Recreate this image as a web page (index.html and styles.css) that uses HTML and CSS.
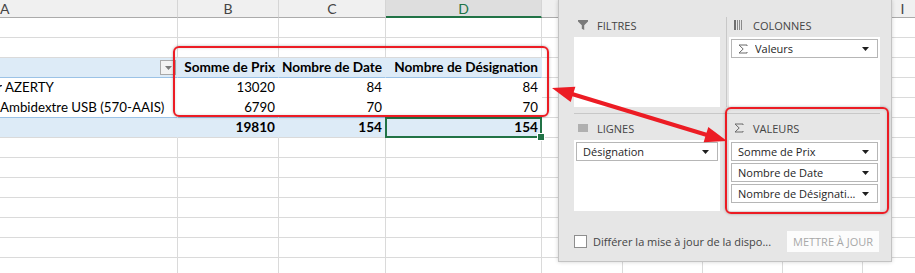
FILE: index.html
```html
<!DOCTYPE html>
<html lang="fr">
<head>
<meta charset="utf-8">
<title>Tableau croisé dynamique</title>
<link rel="stylesheet" href="styles.css">
</head>
<body>
<div class="sheet">
  <div class="row hdr">
    <div class="c ca h hA">A</div>
    <div class="c cb h">B</div>
    <div class="c cc h">C</div>
    <div class="c cd h sel">D</div>
    <div class="c ce h">E</div>
    <div class="c cf h">F</div>
    <div class="c cg h">G</div>
    <div class="c ch h">H</div>
    <div class="c ci h">I</div>
  </div>
  <div class="row">
    <div class="c ca"></div><div class="c cb"></div><div class="c cc"></div><div class="c cd"></div><div class="c ce"></div><div class="c cf"></div><div class="c cg"></div><div class="c ch"></div><div class="c ci"></div>
  </div>
  <div class="row">
    <div class="c ca"></div><div class="c cb"></div><div class="c cc"></div><div class="c cd"></div><div class="c ce"></div><div class="c cf"></div><div class="c cg"></div><div class="c ch"></div><div class="c ci"></div>
  </div>
  <div class="row">
    <div class="c ca ph phA"><span class="fbtn"><svg width="7" height="4" viewBox="0 0 7 4"><path d="M0 0H7L3.5 4Z" fill="#7b7b7b"/></svg></span></div>
    <div class="c cb ph">Somme de Prix</div>
    <div class="c cc ph">Nombre de Date</div>
    <div class="c cd ph">Nombre de Désignation</div>
    <div class="c ce"></div><div class="c cf"></div><div class="c cg"></div><div class="c ch"></div><div class="c ci"></div>
  </div>
  <div class="row">
    <div class="c ca pd lab"><span class="cut">Clavier</span> AZERTY</div>
    <div class="c cb pd">13020</div>
    <div class="c cc pd">84</div>
    <div class="c cd pd">84</div>
    <div class="c ce"></div><div class="c cf"></div><div class="c cg"></div><div class="c ch"></div><div class="c ci"></div>
  </div>
  <div class="row">
    <div class="c ca pd lab last">Ambidextre USB (570-AAIS)</div>
    <div class="c cb pd last">6790</div>
    <div class="c cc pd last">70</div>
    <div class="c cd pd last">70</div>
    <div class="c ce"></div><div class="c cf"></div><div class="c cg"></div><div class="c ch"></div><div class="c ci"></div>
  </div>
  <div class="row">
    <div class="c ca pt"></div>
    <div class="c cb pt">19810</div>
    <div class="c cc pt">154</div>
    <div class="c cd pt active">154</div>
    <div class="c ce"></div><div class="c cf"></div><div class="c cg"></div><div class="c ch"></div><div class="c ci"></div>
  </div>
  <div class="row"><div class="c ca"></div><div class="c cb"></div><div class="c cc"></div><div class="c cd"></div><div class="c ce"></div><div class="c cf"></div><div class="c cg"></div><div class="c ch"></div><div class="c ci"></div></div>
  <div class="row"><div class="c ca"></div><div class="c cb"></div><div class="c cc"></div><div class="c cd"></div><div class="c ce"></div><div class="c cf"></div><div class="c cg"></div><div class="c ch"></div><div class="c ci"></div></div>
  <div class="row"><div class="c ca"></div><div class="c cb"></div><div class="c cc"></div><div class="c cd"></div><div class="c ce"></div><div class="c cf"></div><div class="c cg"></div><div class="c ch"></div><div class="c ci"></div></div>
  <div class="row"><div class="c ca"></div><div class="c cb"></div><div class="c cc"></div><div class="c cd"></div><div class="c ce"></div><div class="c cf"></div><div class="c cg"></div><div class="c ch"></div><div class="c ci"></div></div>
  <div class="row"><div class="c ca"></div><div class="c cb"></div><div class="c cc"></div><div class="c cd"></div><div class="c ce"></div><div class="c cf"></div><div class="c cg"></div><div class="c ch"></div><div class="c ci"></div></div>
  <div class="row"><div class="c ca"></div><div class="c cb"></div><div class="c cc"></div><div class="c cd"></div><div class="c ce"></div><div class="c cf"></div><div class="c cg"></div><div class="c ch"></div><div class="c ci"></div></div>
  <div class="row"><div class="c ca"></div><div class="c cb"></div><div class="c cc"></div><div class="c cd"></div><div class="c ce"></div><div class="c cf"></div><div class="c cg"></div><div class="c ch"></div><div class="c ci"></div></div>
</div>

<div class="pane">
  <div class="areas">
    <div class="area">
      <div class="lbl"><svg class="ico" width="10" height="10" viewBox="0 0 10 10"><path d="M0 0H10V1.6L6.2 5.3V10L3.8 8.8V5.3L0 1.6Z" fill="#7a7a7a"/></svg>FILTRES</div>
      <div class="box"></div>
    </div>
    <div class="area area-r">
      <div class="lbl"><svg class="ico" width="10" height="10" viewBox="0 0 10 10"><rect x="0" y="0" width="2" height="10" fill="#6e6e6e"/><rect x="3" y="0" width="1" height="10" fill="#8a8a8a"/><rect x="5" y="0" width="1" height="10" fill="#8a8a8a"/><rect x="7" y="0" width="1" height="10" fill="#8a8a8a"/></svg>COLONNES</div>
      <div class="box">
        <div class="dd"><svg class="sig" width="10" height="10" viewBox="0 0 10 10"><path d="M9 2V1H1L5.2 5L1 9H9V8" fill="none" stroke="#6a6a6a" stroke-width="1"/></svg><span class="t">Valeurs</span><svg class="arr" width="7" height="4" viewBox="0 0 7 4"><path d="M0 0H7L3.5 4Z" fill="#1e1e1e"/></svg></div>
      </div>
    </div>
    <div class="divider"></div>
    <div class="area">
      <div class="lbl"><svg class="ico" width="10" height="10" viewBox="0 0 10 10"><rect x="0" y="1.5" width="10" height="1" fill="#7a7a7a"/><rect x="0" y="3.5" width="10" height="1" fill="#7a7a7a"/><rect x="0" y="5.5" width="10" height="1" fill="#7a7a7a"/><rect x="0" y="7.5" width="10" height="1" fill="#7a7a7a"/></svg>LIGNES</div>
      <div class="box low">
        <div class="dd"><span class="t">Désignation</span><svg class="arr" width="7" height="4" viewBox="0 0 7 4"><path d="M0 0H7L3.5 4Z" fill="#1e1e1e"/></svg></div>
      </div>
    </div>
    <div class="area area-r">
      <div class="lbl"><svg class="ico" width="10" height="10" viewBox="0 0 10 10"><path d="M9 2V1H1L5.2 5L1 9H9V8" fill="none" stroke="#6a6a6a" stroke-width="1"/></svg>VALEURS</div>
      <div class="box low">
        <div class="dd"><span class="t">Somme de Prix</span><svg class="arr" width="7" height="4" viewBox="0 0 7 4"><path d="M0 0H7L3.5 4Z" fill="#1e1e1e"/></svg></div>
        <div class="dd"><span class="t">Nombre de Date</span><svg class="arr" width="7" height="4" viewBox="0 0 7 4"><path d="M0 0H7L3.5 4Z" fill="#1e1e1e"/></svg></div>
        <div class="dd"><span class="t">Nombre de Désignati...</span><svg class="arr" width="7" height="4" viewBox="0 0 7 4"><path d="M0 0H7L3.5 4Z" fill="#1e1e1e"/></svg></div>
      </div>
    </div>
  </div>
  <div class="foot">
    <label class="defer"><span class="chk"></span>Différer la mise à jour de la dispo...</label>
    <span class="btn">METTRE À JOUR</span>
  </div>
</div>

<div class="mark mark-pivot"></div>
<div class="mark mark-values"></div>
<svg class="arrow" width="915" height="273" viewBox="0 0 915 273">
  <line x1="572" y1="94" x2="707" y2="135" stroke="#ec1c24" stroke-width="4"/>
  <polygon points="552,88 570.7,102 575.4,86.7" fill="#ec1c24"/>
  <polygon points="727,141 703.6,142.3 708.3,127" fill="#ec1c24"/>
</svg>
</body>
</html>
```
FILE: styles.css
```css
body {
  margin: 0;
  width: 915px;
  height: 273px;
  overflow: hidden;
  position: relative;
  background: #fff;
  font-family: Lato, "Open Sans", sans-serif;
}

.sheet {
  display: flex;
  flex-direction: column;
}

.row {
  display: flex;
  height: 20px;
  flex: none;
}

.row.hdr {
  height: 18px;
}

.c {
  box-sizing: border-box;
  flex: none;
  height: 100%;
  border-right: 1px solid #dadada;
  border-bottom: 1px solid #dadada;
  font-size: 13.3px;
  line-height: 19px;
  white-space: nowrap;
  overflow: hidden;
  color: #000;
}

.ca { width: 178px; }
.cb { width: 101px; }
.cc { width: 107px; }
.cd { width: 156px; }
.ce { width: 81px; }
.cf { width: 80px; }
.cg { width: 80px; }
.ch { width: 80px; }
.ci { width: 80px; }

.h {
  background: #f0f0f0;
  border-right-color: #d5d5d5;
  border-bottom-color: #ababab;
  color: #444;
  text-align: center;
  line-height: 17px;
  font-size: 14px;
}

.h.hA {
  text-align: left;
  padding-left: 0;
}

.h.sel {
  background: #dedede;
  color: #217346;
  border-bottom: 2px solid #217346;
}

.ph {
  background: #ddebf7;
  border-right-color: #ddebf7;
  border-bottom-color: #9bc2e6;
  font-weight: bold;
  font-size: 13.6px;
  text-align: right;
  padding-right: 3px;
}

.phA {
  display: flex;
  justify-content: flex-end;
  align-items: center;
  padding-right: 1px;
}

.fbtn {
  box-sizing: border-box;
  width: 16px;
  height: 15px;
  border: 1px solid #a9a9a9;
  background: #f3f3f3;
  display: flex;
  align-items: center;
  justify-content: center;
}

.pd {
  background: #fff;
  border-right-color: #fff;
  border-bottom-color: #fff;
  text-align: right;
  padding-right: 3px;
}

.pd.last {
  border-bottom-color: #9bc2e6;
}

.lab {
  text-align: left;
  padding-right: 0;
}

.cut {
  display: inline-block;
  width: 2px;
  overflow: hidden;
  direction: rtl;
  vertical-align: top;
}

.pt {
  background: #ddebf7;
  border-right-color: #ddebf7;
  border-bottom-color: #dadada;
  font-weight: bold;
  font-size: 13.6px;
  text-align: right;
  padding-right: 3px;
}

.active {
  position: relative;
  overflow: visible;
}

.active::after {
  content: "";
  position: absolute;
  left: -1px;
  top: -1px;
  right: -1px;
  bottom: -1px;
  border: 2px solid #217346;
}

.active::before {
  content: "";
  position: absolute;
  right: -4px;
  bottom: -4px;
  width: 6px;
  height: 6px;
  background: #217346;
  border: 1px solid #fff;
  z-index: 2;
}

/* Field list pane */
.pane {
  position: absolute;
  left: 558px;
  top: 0;
  width: 334px;
  height: 262px;
  box-sizing: border-box;
  border: 1px solid #c3c3c3;
  border-top: none;
  background: #e6e6e6;
  padding: 17px 11px 0 15px;
  box-shadow: 0 0 4px rgba(0, 0, 0, 0.18);
  font-family: "Open Sans", "Noto Sans", sans-serif;
  color: #444;
}

.areas {
  display: grid;
  grid-template-columns: 146px 154px;
  column-gap: 6px;
}

.area-r {
  border-left: 1px solid #c8c8c8;
  padding-left: 2px;
}

.lbl {
  display: flex;
  align-items: center;
  height: 16px;
  margin-bottom: 4px;
  padding-left: 4px;
  font-size: 11px;
  color: #444;
}

.area-r .lbl {
  padding-left: 5px;
}

.ico {
  flex: none;
  margin-right: 9px;
}

.box {
  box-sizing: border-box;
  height: 70px;
  background: #fff;
  padding: 2px;
  display: flex;
  flex-direction: column;
  gap: 2px;
}

.box.low {
  height: 71px;
}

.divider {
  grid-column: 1 / -1;
  height: 1px;
  background: #c8c8c8;
  margin: 6px 0;
}

.dd {
  box-sizing: border-box;
  height: 19px;
  border: 1px solid #b6b6b6;
  background: #fff;
  display: flex;
  align-items: center;
  padding: 0 8px 0 6px;
  font-size: 11px;
  color: #262626;
}

.dd .sig {
  flex: none;
  margin-right: 7px;
}

.dd .t {
  flex: 1;
  white-space: nowrap;
  overflow: hidden;
}

.dd .arr {
  flex: none;
}

.foot {
  display: flex;
  align-items: center;
  justify-content: space-between;
  margin-top: 20px;
  height: 21px;
}

.defer {
  display: flex;
  align-items: center;
  font-size: 11px;
  color: #444;
}

.chk {
  box-sizing: border-box;
  width: 13px;
  height: 13px;
  border: 1px solid #8e8e8e;
  background: #fff;
  margin-right: 6px;
}

.btn {
  box-sizing: border-box;
  width: 92px;
  height: 21px;
  margin-right: 1px;
  background: #fcfcfc;
  color: #a8a8a8;
  font-size: 11px;
  display: flex;
  align-items: center;
  justify-content: center;
}

/* Annotations */
.mark {
  position: absolute;
  box-sizing: border-box;
  border: 2px solid #ec1c24;
  border-radius: 6px;
  box-shadow: 0 0 3px rgba(0, 0, 0, 0.3), inset 0 0 3px rgba(0, 0, 0, 0.15);
}

.mark-pivot {
  left: 173px;
  top: 46px;
  width: 376px;
  height: 71px;
}

.mark-values {
  left: 725px;
  top: 107px;
  width: 164px;
  height: 107px;
}

.arrow {
  position: absolute;
  left: 0;
  top: 0;
  pointer-events: none;
}
```
